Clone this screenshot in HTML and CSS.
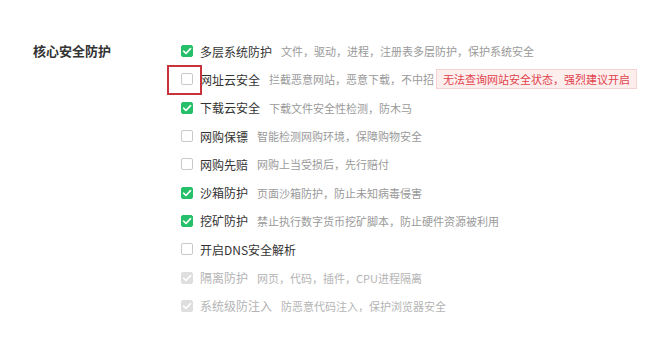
FILE: index.html
```html
<!DOCTYPE html>
<html lang="zh-CN">
<head>
<meta charset="utf-8">
<link rel="stylesheet" href="styles.css">
</head>
<body>
<div class="section">
  <div class="label">核心安全防护</div>
  <ul class="list">
    <li class="row">
      <span class="cb on"><svg viewBox="0 0 12 12"><path d="M2.6 6.2 L5 8.5 L9.5 3.6" /></svg></span>
      <span class="title">多层系统防护</span>
      <span class="desc">文件，驱动，进程，注册表多层防护，保护系统安全</span>
    </li>
    <li class="row">
      <span class="cb"></span>
      <span class="title">网址云安全</span>
      <span class="desc">拦截恶意网站，恶意下载，不中招</span>
      <span class="warn">无法查询网站安全状态，强烈建议开启</span>
      <span class="mark"></span>
    </li>
    <li class="row">
      <span class="cb on"><svg viewBox="0 0 12 12"><path d="M2.6 6.2 L5 8.5 L9.5 3.6" /></svg></span>
      <span class="title">下载云安全</span>
      <span class="desc">下载文件安全性检测，防木马</span>
    </li>
    <li class="row">
      <span class="cb"></span>
      <span class="title">网购保镖</span>
      <span class="desc">智能检测网购环境，保障购物安全</span>
    </li>
    <li class="row">
      <span class="cb"></span>
      <span class="title">网购先赔</span>
      <span class="desc">网购上当受损后，先行赔付</span>
    </li>
    <li class="row">
      <span class="cb on"><svg viewBox="0 0 12 12"><path d="M2.6 6.2 L5 8.5 L9.5 3.6" /></svg></span>
      <span class="title">沙箱防护</span>
      <span class="desc">页面沙箱防护，防止未知病毒侵害</span>
    </li>
    <li class="row">
      <span class="cb on"><svg viewBox="0 0 12 12"><path d="M2.6 6.2 L5 8.5 L9.5 3.6" /></svg></span>
      <span class="title">挖矿防护</span>
      <span class="desc">禁止执行数字货币挖矿脚本，防止硬件资源被利用</span>
    </li>
    <li class="row">
      <span class="cb"></span>
      <span class="title">开启DNS安全解析</span>
    </li>
    <li class="row disabled">
      <span class="cb on"><svg viewBox="0 0 12 12"><path d="M2.6 6.2 L5 8.5 L9.5 3.6" /></svg></span>
      <span class="title">隔离防护</span>
      <span class="desc">网页，代码，插件，CPU进程隔离</span>
    </li>
    <li class="row disabled">
      <span class="cb on"><svg viewBox="0 0 12 12"><path d="M2.6 6.2 L5 8.5 L9.5 3.6" /></svg></span>
      <span class="title">系统级防注入</span>
      <span class="desc">防恶意代码注入，保护浏览器安全</span>
    </li>
  </ul>
</div>
</body>
</html>
```

FILE: styles.css
```css
html, body {
  margin: 0;
  padding: 0;
  background: #ffffff;
}
body {
  font-family: "Noto Sans CJK SC", "Noto Sans", "Liberation Sans", sans-serif;
  width: 650px;
  height: 341px;
  overflow: hidden;
}
.section {
  display: grid;
  grid-template-columns: 148px 1fr;
  padding: 37px 0 0 33px;
}
.label {
  font-size: 13px;
  font-weight: bold;
  color: #333333;
  height: 28.3px;
  line-height: 28.3px;
}
.list {
  list-style: none;
  margin: 0;
  padding: 0;
}
.row {
  position: relative;
  display: flex;
  align-items: center;
  height: 28.3px;
  white-space: nowrap;
}
.cb {
  box-sizing: border-box;
  width: 12px;
  height: 12px;
  border: 1px solid #c9c9c9;
  border-radius: 2px;
  background: #ffffff;
  margin-right: 7px;
  flex: none;
  display: flex;
}
.cb.on {
  background: #27c06a;
  border-color: #27c06a;
}
.cb svg {
  width: 12px;
  height: 12px;
  margin: -1px;
}
.cb svg path {
  fill: none;
  stroke: #ffffff;
  stroke-width: 1.6;
  stroke-linecap: round;
  stroke-linejoin: round;
}
.title {
  font-size: 12px;
  color: #333333;
  margin-right: 9px;
}
.desc {
  font-size: 11px;
  color: #9a9a9a;
}
.disabled .cb.on {
  background: #dedede;
  border-color: #dedede;
}
.disabled .title,
.disabled .desc {
  color: #b4b4b4;
}
.warn {
  box-sizing: border-box;
  margin-left: 2px;
  font-size: 11px;
  color: #e0424a;
  background: #fdeeee;
  border: 1px solid #f6d2d2;
  padding: 0 6px;
  height: 20px;
  line-height: 18px;
}
.mark {
  position: absolute;
  left: -14px;
  top: -0.5px;
  width: 35px;
  height: 30px;
  box-sizing: border-box;
  border: 2px solid #c8323b;
}
```
